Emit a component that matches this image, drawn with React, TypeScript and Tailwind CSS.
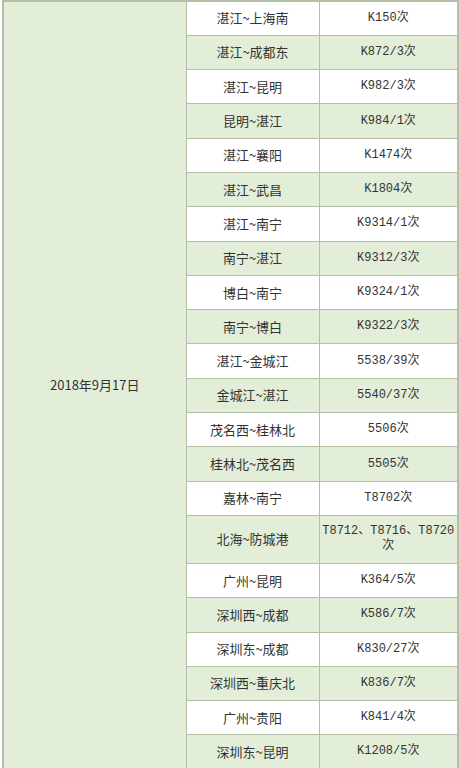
const rows: [string, React.ReactNode][] = [
  ['湛江~上海南', 'K150次'],
  ['湛江~成都东', 'K872/3次'],
  ['湛江~昆明', 'K982/3次'],
  ['昆明~湛江', 'K984/1次'],
  ['湛江~襄阳', 'K1474次'],
  ['湛江~武昌', 'K1804次'],
  ['湛江~南宁', 'K9314/1次'],
  ['南宁~湛江', 'K9312/3次'],
  ['博白~南宁', 'K9324/1次'],
  ['南宁~博白', 'K9322/3次'],
  ['湛江~金城江', '5538/39次'],
  ['金城江~湛江', '5540/37次'],
  ['茂名西~桂林北', '5506次'],
  ['桂林北~茂名西', '5505次'],
  ['嘉林~南宁', 'T8702次'],
  [
    '北海~防城港',
    <>
      T8712、T8716、T8720
      <br />
      次
    </>,
  ],
  ['广州~昆明', 'K364/5次'],
  ['深圳西~成都', 'K586/7次'],
  ['深圳东~成都', 'K830/27次'],
  ['深圳西~重庆北', 'K836/7次'],
  ['广州~贵阳', 'K841/4次'],
  ['深圳东~昆明', 'K1208/5次'],
];

export default function App() {
  return (
    <div className="h-[768px] w-[459px] overflow-hidden bg-white">
      <table className="ml-[2px] w-[455px] table-fixed border-collapse border-2 border-[#b3c0a6] text-[#333]">
        <colgroup>
          <col className="w-[183px]" />
          <col className="w-[133px]" />
          <col className="w-[139px]" />
        </colgroup>
        <tbody>
          {rows.map(([route, train], i) => (
            <tr
              key={i}
              className={`${i % 2 === 1 ? 'bg-[#e2eed8]' : 'bg-white'} ${
                i === 15 ? 'h-[48px]' : 'h-[34.3px]'
              }`}
            >
              {i === 0 && (
                <td
                  rowSpan={rows.length}
                  className="border border-[#b3c0a6] bg-[#e2eed8] text-center align-middle text-[13px] font-['Noto_Sans_CJK_SC',sans-serif]"
                >
                  2018年9月17日
                </td>
              )}
              <td className="border border-[#b3c0a6] px-1 text-center align-middle text-[13px] leading-[16px] font-['Noto_Sans_CJK_SC',sans-serif]">
                {route}
              </td>
              <td className="border border-[#b3c0a6] px-[2px] text-center align-middle text-[12px] leading-[15px] font-['Liberation_Mono','Noto_Sans_CJK_SC',monospace]">
                {train}
              </td>
            </tr>
          ))}
        </tbody>
      </table>
    </div>
  );
}
